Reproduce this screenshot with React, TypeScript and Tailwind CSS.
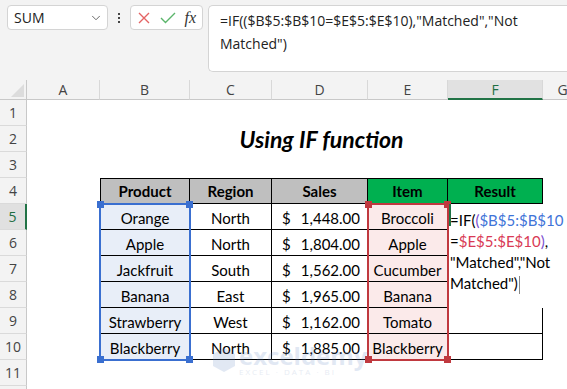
import React from 'react';
import { ChevronDown } from 'lucide-react';

const cellFont = { fontFamily: 'Lato, "Liberation Sans", sans-serif' };
const uiFont = { fontFamily: '"Open Sans", "Noto Sans", sans-serif' };

const columns = [
  { key: 'A', w: 'w-[73px]' },
  { key: 'B', w: 'w-[90px]' },
  { key: 'C', w: 'w-[82px]' },
  { key: 'D', w: 'w-[96px]' },
  { key: 'E', w: 'w-[80px]' },
  { key: 'F', w: 'w-[95px]' },
  { key: 'G', w: 'w-[40px]' },
];

const data = [
  { product: 'Orange', region: 'North', sales: '1,448.00', item: 'Broccoli' },
  { product: 'Apple', region: 'North', sales: '1,804.00', item: 'Apple' },
  { product: 'Jackfruit', region: 'South', sales: '1,562.00', item: 'Cucumber' },
  { product: 'Banana', region: 'East', sales: '1,965.00', item: 'Banana' },
  { product: 'Strawberry', region: 'West', sales: '1,162.00', item: 'Tomato' },
  { product: 'Blackberry', region: 'North', sales: '1,885.00', item: 'Blackberry' },
];

function RowHeader({ n, active }: { n?: number; active?: boolean }) {
  return (
    <div
      className={`w-[27px] h-[26px] shrink-0 flex items-end justify-center pb-[2px] text-[14px] border-b border-[#dadada] ${
        active ? 'bg-[#e0e0e0] text-[#1e6e42] border-r-2 border-r-[#217346]' : 'bg-[#f3f3f3] text-[#444] border-r border-r-[#c8c8c8]'
      }`}
      style={uiFont}
    >
      {n}
    </div>
  );
}

function Handle({ className }: { className: string }) {
  return <div className={`absolute w-[7px] h-[7px] ${className}`} />;
}

export default function App() {
  return (
    <div className="w-[567px] h-[389px] overflow-hidden bg-white relative">
      {/* Formula bar */}
      <div className="h-[80px] bg-[#f3f3f3] flex items-start pt-[5px] pl-[7px]">
        <div className="w-[101px] h-[25px] bg-white border border-[#d4d4d4] rounded-[4px] flex items-center pl-[6px] pr-[4px]">
          <span className="text-[14px] text-[#222] flex-1" style={uiFont}>SUM</span>
          <ChevronDown className="w-[14px] h-[14px] text-[#555]" strokeWidth={1.5} />
        </div>
        <div className="w-[22px] h-[25px] flex flex-col items-center justify-center gap-[2px]">
          <span className="w-[2px] h-[2px] bg-[#444]" />
          <span className="w-[2px] h-[2px] bg-[#444]" />
          <span className="w-[2px] h-[2px] bg-[#444]" />
        </div>
        <div className="w-[73px] h-[25px] bg-white border border-[#d4d4d4] rounded-[4px] flex items-center justify-between px-[6px]">
          <svg width="14" height="14" viewBox="0 0 14 14">
            <path d="M2 2 L12 12 M12 2 L2 12" stroke="#e46464" strokeWidth="1.4" fill="none" />
          </svg>
          <svg width="16" height="12" viewBox="0 0 16 12">
            <path d="M1 6 L5.5 10.5 L15 1" stroke="#5bb56b" strokeWidth="1.4" fill="none" />
          </svg>
          <span className="text-[16px] italic text-[#333] leading-none" style={{ fontFamily: '"Liberation Serif", serif' }}>
            <i>f</i>x
          </span>
        </div>
        <div className="ml-[5px] flex-1 h-[67px] bg-white border border-[#d4d4d4] border-r-0 rounded-l-[5px] pl-[11px] pt-[3px] text-[14px] leading-[23px] text-[#222]" style={uiFont}>
          =IF(($B$5:$B$10=$E$5:$E$10),"Matched","Not
          <br />
          Matched")
        </div>
      </div>

      {/* Column headers */}
      <div className="flex h-[20px] bg-[#f3f3f3] text-[14px] text-[#444]" style={uiFont}>
        <div className="w-[27px] shrink-0 border-r border-[#c8c8c8] border-b relative">
          <svg className="absolute right-[2px] bottom-[2px]" width="13" height="13" viewBox="0 0 13 13">
            <path d="M13 0 L13 13 L0 13 Z" fill="#dcdcdc" />
          </svg>
        </div>
        {columns.map((c) => (
          <div
            key={c.key}
            className={`${c.w} shrink-0 flex items-center justify-center border-r border-[#d8d8d8] ${
              c.key === 'F' ? 'bg-[#e1e1e1] text-[#1e6e42] border-b-2 border-b-[#217346]' : 'border-b border-b-[#c8c8c8]'
            }`}
          >
            {c.key}
          </div>
        ))}
      </div>

      {/* Sheet body */}
      <div className="relative text-[15px] text-black" style={cellFont}>
        {/* Rows 1-3 */}
        {[1, 2, 3].map((n) => (
          <div key={n} className="flex h-[26px]">
            <RowHeader n={n} />
            {n === 2 && (
              <div className="ml-[73px] w-[443px] flex items-center justify-center">
                <span className="text-[23px] font-bold italic">Using IF function</span>
              </div>
            )}
          </div>
        ))}

        {/* Row 4: table header */}
        <div className="flex h-[26px]">
          <RowHeader n={4} />
          <div className="w-[73px] shrink-0" />
          <div className="w-[90px] shrink-0 bg-[#bfbfbf] border border-black flex items-center justify-center font-bold">Product</div>
          <div className="w-[82px] shrink-0 bg-[#bfbfbf] border-y border-r border-black flex items-center justify-center font-bold">Region</div>
          <div className="w-[96px] shrink-0 bg-[#bfbfbf] border-y border-r border-black flex items-center justify-center font-bold">Sales</div>
          <div className="w-[80px] shrink-0 bg-[#00b050] border-y border-r border-black flex items-center justify-center font-bold">Item</div>
          <div className="w-[95px] shrink-0 bg-[#00b050] border-y border-r border-black flex items-center justify-center font-bold">Result</div>
        </div>

        {/* Rows 5-10: data */}
        {data.map((d, i) => (
          <div key={d.product} className="flex h-[26px]">
            <RowHeader n={i + 5} active={i === 0} />
            <div className="w-[73px] shrink-0" />
            <div className="w-[90px] shrink-0 bg-[#e8eef8] border-x border-b border-black flex items-center justify-center pt-[4px]">{d.product}</div>
            <div className="w-[82px] shrink-0 border-r border-b border-black flex items-center justify-center pt-[4px]">{d.region}</div>
            <div className="w-[96px] shrink-0 border-r border-b border-black flex items-center justify-between pl-[10px] pr-[7px] pt-[4px]">
              <span>$</span>
              <span>{d.sales}</span>
            </div>
            <div className="w-[80px] shrink-0 bg-[#fbeaea] border-r border-b border-black flex items-center justify-center pt-[4px]">{d.item}</div>
            <div className={`w-[95px] shrink-0 border-r border-black ${i >= 3 ? 'border-b' : ''}`} />
          </div>
        ))}

        {/* Row 11 and beyond */}
        <div className="flex h-[26px]">
          <RowHeader n={11} />
        </div>
        <div className="flex h-[26px]">
          <RowHeader />
        </div>

        {/* Range highlight B5:B10 */}
        <div className="absolute left-[99px] top-[103px] w-[92px] h-[158px] border-2 border-[#3a6fd0]">
          <Handle className="-left-[4px] -top-[4px] bg-[#3a6fd0]" />
          <Handle className="-right-[4px] -top-[4px] bg-[#3a6fd0]" />
          <Handle className="-left-[4px] -bottom-[4px] bg-[#3a6fd0]" />
          <Handle className="-right-[4px] -bottom-[4px] bg-[#3a6fd0]" />
        </div>

        {/* Range highlight E5:E10 */}
        <div className="absolute left-[367px] top-[103px] w-[82px] h-[158px] border-2 border-[#c0393f]">
          <Handle className="-left-[4px] -top-[4px] bg-[#c0393f]" />
          <Handle className="-right-[4px] -top-[4px] bg-[#c0393f]" />
          <Handle className="-left-[4px] -bottom-[4px] bg-[#c0393f]" />
          <Handle className="-right-[4px] -bottom-[4px] bg-[#c0393f]" />
        </div>

        {/* In-cell editor F5 */}
        <div className="absolute left-[449px] top-[104px] w-[94px] h-[104px] bg-white pl-[1px] pt-[6px] text-[15px] leading-[21px] whitespace-nowrap">
          <div className="absolute left-0 top-0 w-[2px] h-[22px] bg-[#217346]" />
          <div>
            =IF(<span className="text-[#7a4fd0]">(</span>
            <span className="text-[#3f74d8]">$B$5:$B$10</span>
          </div>
          <div>
            =<span className="text-[#d93a55]">$E$5:$E$10</span>
            <span className="text-[#7a4fd0]">)</span>,
          </div>
          <div>"Matched","Not</div>
          <div>
            Matched")<span className="inline-block w-px h-[18px] bg-[#888] align-middle ml-[1px]" />
          </div>
        </div>

        {/* Watermark */}
        <div className="absolute left-[212px] top-[244px] flex items-center gap-[3px] opacity-20 pointer-events-none">
          <svg width="24" height="26" viewBox="0 0 24 26">
            <path d="M12 1 L23 7 L23 19 L12 25 L1 19 L1 7 Z" fill="#6f8fc8" />
          </svg>
          <div className="flex flex-col leading-none">
            <span className="text-[24px] font-bold text-[#6f8fc8]" style={uiFont}>exceldemy</span>
            <span className="text-[8px] tracking-[2px] text-[#8aa0c8]" style={uiFont}>EXCEL · DATA · BI</span>
          </div>
        </div>
      </div>
    </div>
  );
}
